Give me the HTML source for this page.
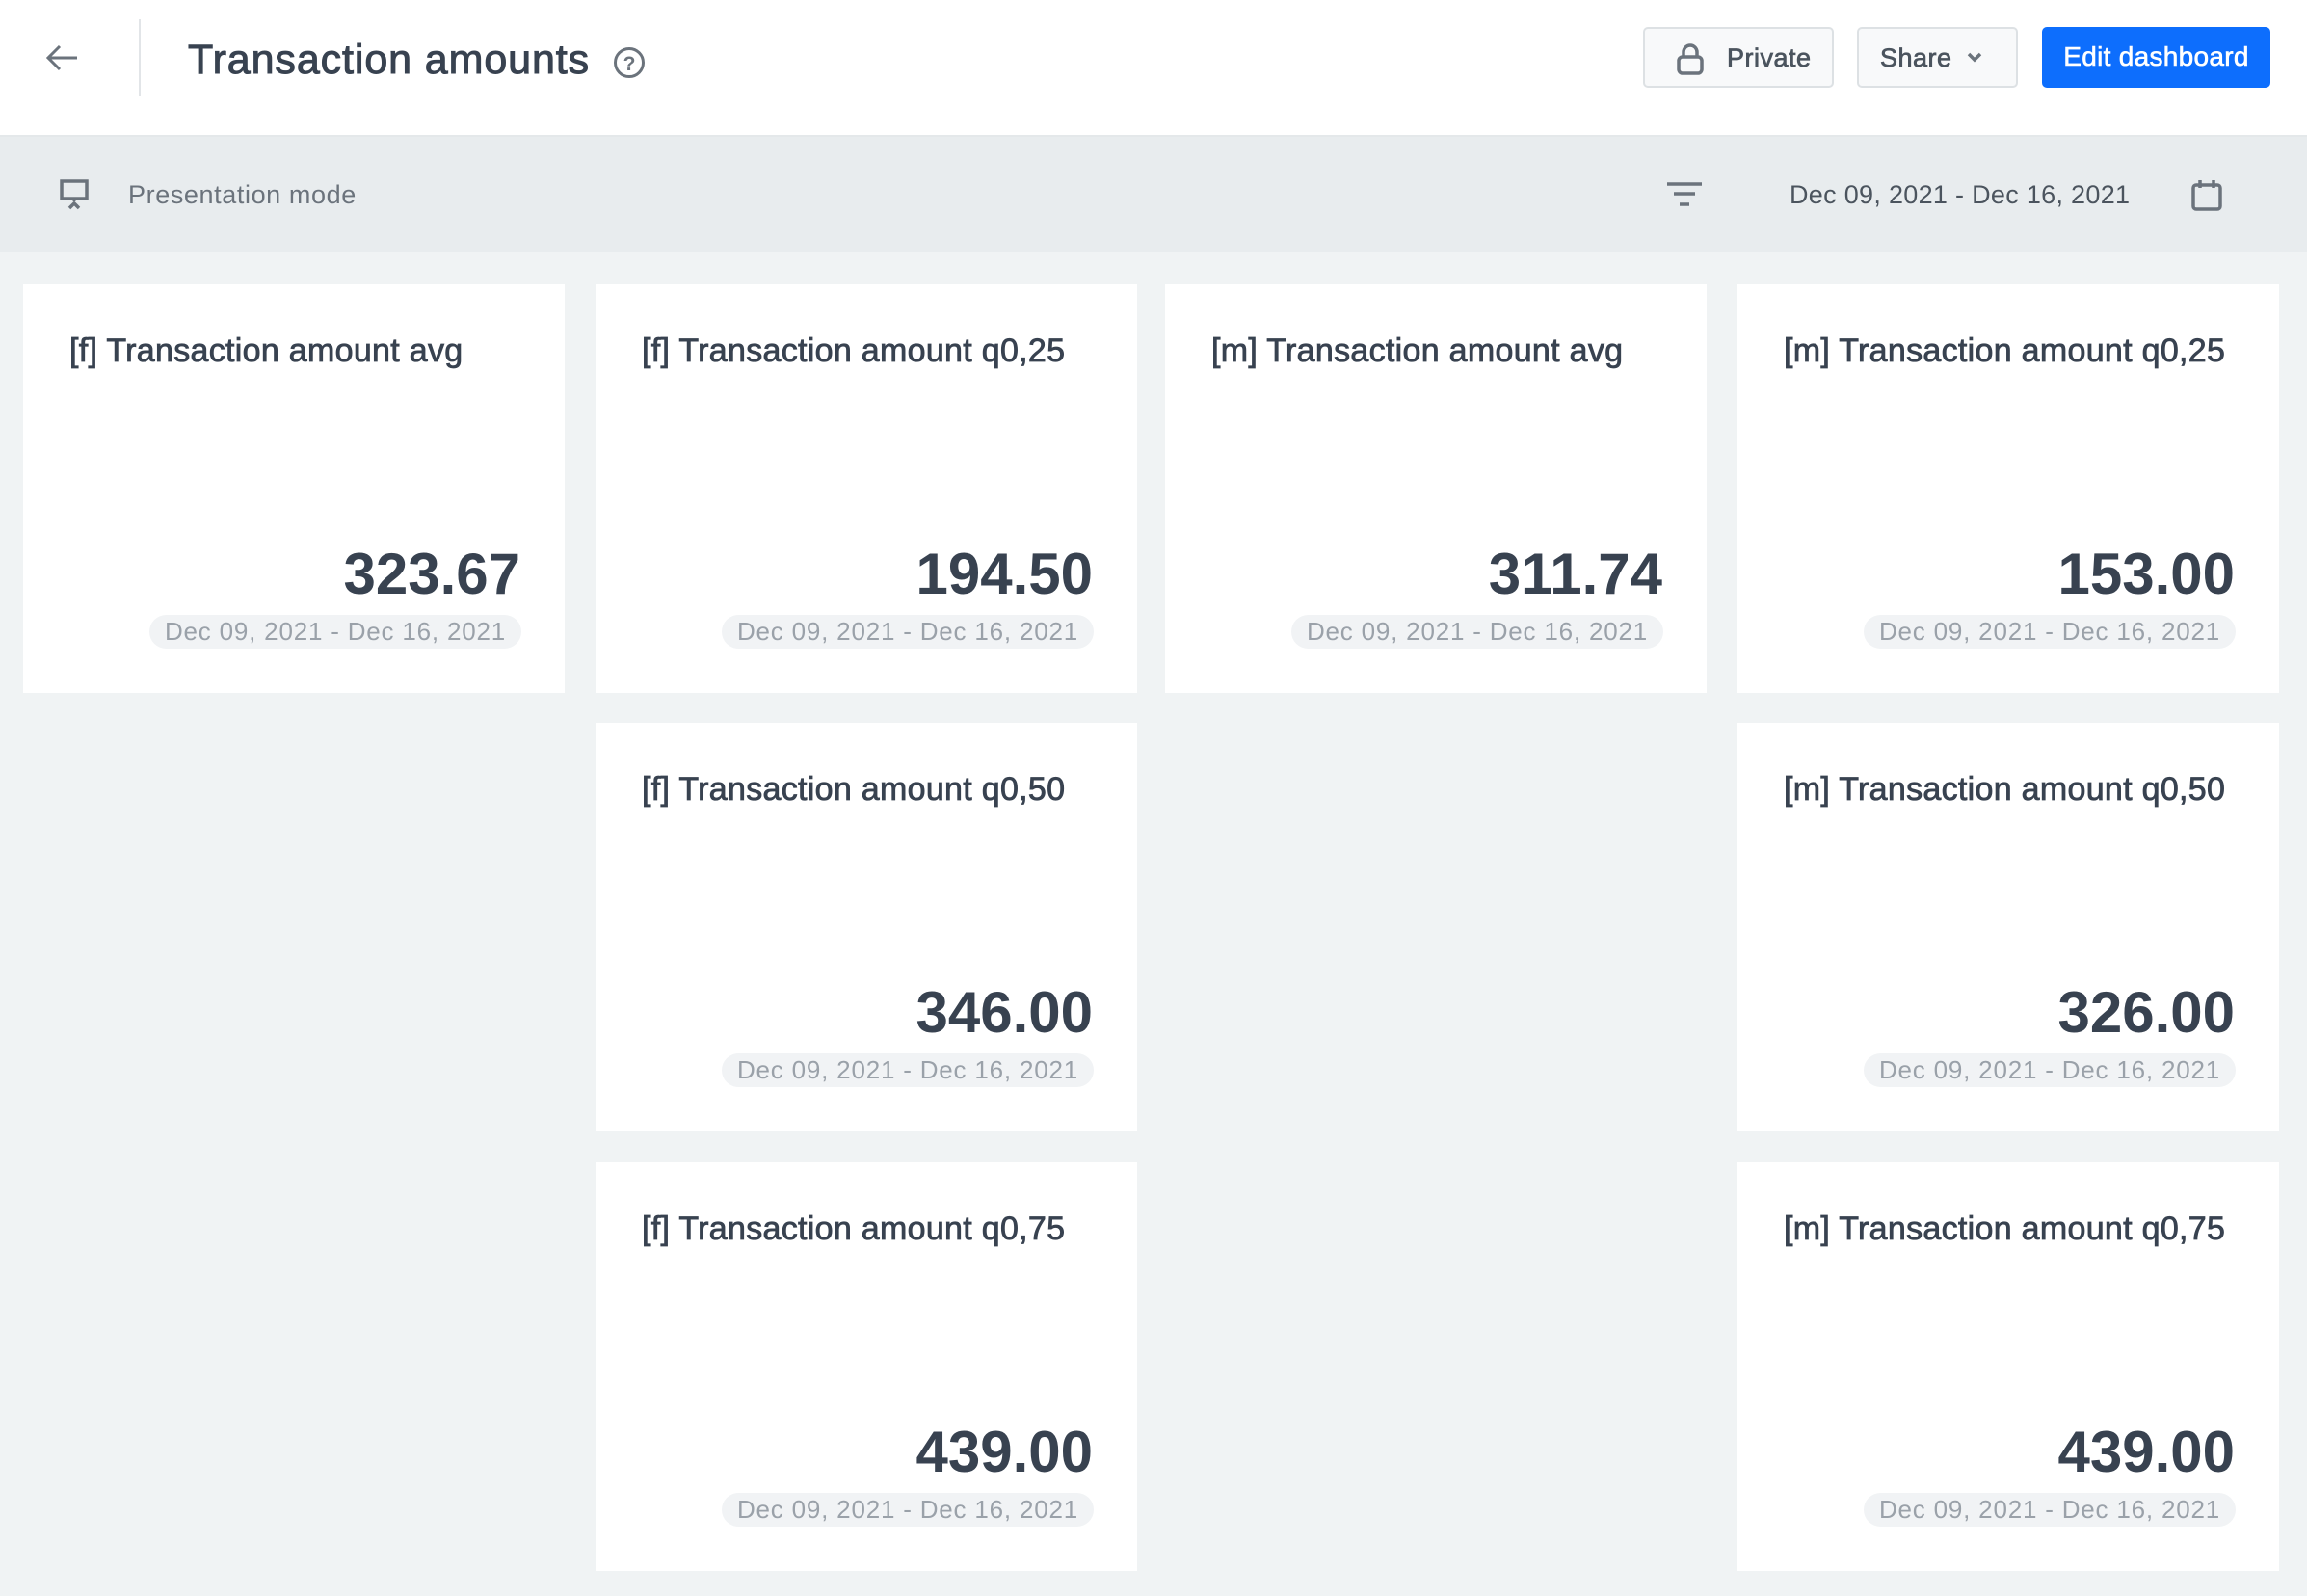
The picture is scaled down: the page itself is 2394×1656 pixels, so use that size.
<!DOCTYPE html>
<html><head><meta charset="utf-8"><style>
*{box-sizing:border-box;margin:0;padding:0}
body{width:2394px;height:1656px;background:#f0f3f4;font-family:"Liberation Sans",sans-serif;position:relative;overflow:hidden;color:#384250}
.hdr{position:absolute;left:0;top:0;width:2394px;height:142px;background:#fff;border-bottom:2px solid #e4e8ea}
.tb{position:absolute;left:0;top:142px;width:2394px;height:119px;background:#e8ecee}
.abs{position:absolute}
.btn{position:absolute;top:28px;height:63px;border:2px solid #dde1e4;border-radius:5px;background:#f8f9fa;font-size:27px;color:#4b545e;-webkit-text-stroke:0.7px #4b545e;letter-spacing:.5px}
.card{position:absolute;width:562px;height:424px;background:#fff}
.card .t{position:absolute;left:48px;top:50px;font-size:34px;color:#384250;-webkit-text-stroke:0.8px #384250;letter-spacing:.3px}
.card .v{position:absolute;right:46px;top:266px;font-size:60px;font-weight:bold;color:#384250;letter-spacing:0}
.card .d{position:absolute;right:45px;top:343px;height:35px;line-height:35px;padding:0 16px;border-radius:18px;background:#f1f3f5;color:#9aa1a9;font-size:26px;letter-spacing:.8px}
</style></head><body>
<div class="hdr"></div>
<svg class="abs" style="left:46px;top:44px" width="36" height="32" viewBox="0 0 36 32"><path d="M34 16H4M16 4L4 16l12 12" fill="none" stroke="#6b737c" stroke-width="3"/></svg>
<div class="abs" style="left:144px;top:20px;width:2px;height:80px;background:#e2e5e8"></div>
<div class="abs" style="left:195px;top:38px;font-size:43px;color:#384250;letter-spacing:.9px;-webkit-text-stroke:1px #384250">Transaction amounts</div>
<svg class="abs" style="left:636px;top:48px" width="34" height="34" viewBox="0 0 34 34"><circle cx="17" cy="17" r="14.5" fill="none" stroke="#6b737c" stroke-width="3"/><text x="17" y="25" text-anchor="middle" font-size="21" font-weight="bold" fill="#6b737c" font-family="Liberation Sans">?</text></svg>
<div class="btn" style="left:1705px;width:198px"><svg class="abs" style="left:32px;top:14px" width="30" height="34" viewBox="0 0 30 34"><rect x="3" y="15" width="24" height="17" rx="4" fill="none" stroke="#6b737c" stroke-width="3.5"/><path d="M8 15V10a7 7 0 0 1 14 0v5" fill="none" stroke="#6b737c" stroke-width="3.5"/></svg><span class="abs" style="left:85px;top:15px">Private</span></div>
<div class="btn" style="left:1927px;width:167px"><span class="abs" style="left:22px;top:15px">Share</span><svg class="abs" style="left:112px;top:24px" width="16" height="12" viewBox="0 0 16 12"><path d="M2 2l6 6 6-6" fill="none" stroke="#6b737c" stroke-width="3.5"/></svg></div>
<div class="btn" style="left:2119px;width:237px;background:#0d6efd;border-color:#0d6efd;color:#fff;-webkit-text-stroke:0.6px #fff;text-align:center;line-height:58px;font-size:28px;letter-spacing:.3px">Edit dashboard</div>
<div class="tb"></div>
<svg class="abs" style="left:62px;top:186px" width="32" height="32" viewBox="0 0 32 32"><rect x="2" y="2" width="26" height="18" fill="none" stroke="#6b737c" stroke-width="3.5"/><path d="M15 20v3" stroke="#6b737c" stroke-width="3"/><path d="M10 30l5-5 5 5" fill="none" stroke="#6b737c" stroke-width="3.5"/></svg>
<div class="abs" style="left:133px;top:187px;font-size:27px;color:#6b737c;letter-spacing:.6px">Presentation mode</div>
<svg class="abs" style="left:1729px;top:188px" width="38" height="28" viewBox="0 0 38 28"><path d="M1 3h36M8 13h22M14 24h10" stroke="#6b737c" stroke-width="3.5"/></svg>
<div class="abs" style="left:1857px;top:187px;font-size:27px;color:#4b545e;letter-spacing:.3px">Dec 09, 2021 - Dec 16, 2021</div>
<svg class="abs" style="left:2273px;top:185px" width="34" height="34" viewBox="0 0 34 34"><rect x="3" y="7" width="28" height="25" rx="3" fill="none" stroke="#6b737c" stroke-width="3.5"/><path d="M10 2v8M24 2v8" stroke="#6b737c" stroke-width="3.5"/></svg>

<div class="card" style="left:24px;top:295px"><div class="t">[f] Transaction amount avg</div><div class="v">323.67</div><div class="d">Dec 09, 2021 - Dec 16, 2021</div></div>
<div class="card" style="left:618px;top:295px"><div class="t">[f] Transaction amount q0,25</div><div class="v">194.50</div><div class="d">Dec 09, 2021 - Dec 16, 2021</div></div>
<div class="card" style="left:1209px;top:295px"><div class="t">[m] Transaction amount avg</div><div class="v">311.74</div><div class="d">Dec 09, 2021 - Dec 16, 2021</div></div>
<div class="card" style="left:1803px;top:295px"><div class="t">[m] Transaction amount q0,25</div><div class="v">153.00</div><div class="d">Dec 09, 2021 - Dec 16, 2021</div></div>
<div class="card" style="left:618px;top:750px"><div class="t">[f] Transaction amount q0,50</div><div class="v">346.00</div><div class="d">Dec 09, 2021 - Dec 16, 2021</div></div>
<div class="card" style="left:1803px;top:750px"><div class="t">[m] Transaction amount q0,50</div><div class="v">326.00</div><div class="d">Dec 09, 2021 - Dec 16, 2021</div></div>
<div class="card" style="left:618px;top:1206px"><div class="t">[f] Transaction amount q0,75</div><div class="v">439.00</div><div class="d">Dec 09, 2021 - Dec 16, 2021</div></div>
<div class="card" style="left:1803px;top:1206px"><div class="t">[m] Transaction amount q0,75</div><div class="v">439.00</div><div class="d">Dec 09, 2021 - Dec 16, 2021</div></div>
</body></html>
